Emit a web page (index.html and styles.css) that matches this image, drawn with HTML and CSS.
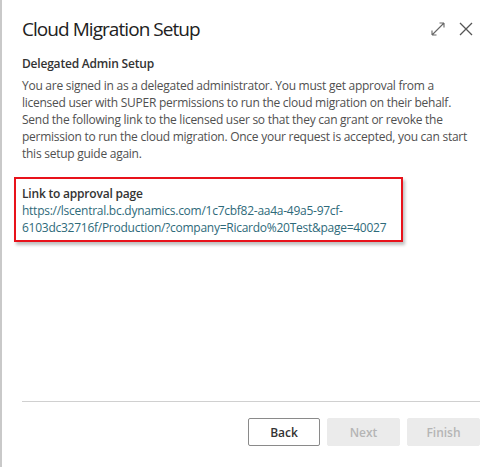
FILE: index.html
```html
<!DOCTYPE html>
<html>
<head>
<meta charset="utf-8">
<link rel="stylesheet" href="styles.css">
</head>
<body>
<div class="dialog">
  <header class="head">
    <h1 class="title">Cloud Migration Setup</h1>
    <div class="tools">
      <svg class="icon" width="14" height="14" viewBox="0 0 14 14"><path d="M1 13 L13 1 M1 13 L1 8.5 M1 13 L5.5 13 M13 1 L8.5 1 M13 1 L13 5.5" stroke="#666" stroke-width="1.1" fill="none"/></svg>
      <svg class="icon" width="14" height="14" viewBox="0 0 14 14"><path d="M1 1 L13 13 M13 1 L1 13" stroke="#555" stroke-width="1.3" fill="none"/></svg>
    </div>
  </header>
  <main class="content">
    <h2 class="subtitle">Delegated Admin Setup</h2>
    <p class="text">You are signed in as a delegated administrator. You must get approval from a licensed user with SUPER permissions to run the cloud migration on their behalf. Send the following link to the licensed user so that they can grant or revoke the permission to run the cloud migration. Once your request is accepted, you can start this setup guide again.</p>
    <div class="linkbox">
      <div class="label">Link to approval page</div>
      <div class="url">https://lscentral.bc.dynamics.com/1c7cbf82-aa4a-49a5-97cf-<br>6103dc32716f/Production/?company=Ricardo%20Test&amp;page=40027</div>
    </div>
  </main>
  <footer class="foot">
    <button class="btn primary">Back</button>
    <button class="btn disabled">Next</button>
    <button class="btn disabled">Finish</button>
  </footer>
</div>
</body>
</html>
```
FILE: styles.css
```css
html, body {
  margin: 0;
  padding: 0;
  background: #fff;
}
body {
  font-family: "Open Sans", "Noto Sans", sans-serif;
  color: #505050;
}
.dialog {
  box-sizing: border-box;
  width: 500px;
  height: 467px;
  border-left: 2px solid #c9c9c9;
  display: flex;
  flex-direction: column;
  padding: 0 20px 0 20px;
}
.head {
  display: flex;
  align-items: center;
  justify-content: space-between;
  height: 56px;
  padding-top: 2px;
  box-sizing: border-box;
}
.title {
  margin: 0;
  font-size: 19px;
  font-weight: 400;
  color: #212121;
  letter-spacing: -0.95px;
}
.tools {
  display: flex;
  gap: 14px;
  margin-right: 7px;
}
.icon { display: block; }
.content {
  flex: 1;
}
.subtitle {
  margin: 0;
  font-size: 12px;
  font-weight: 600;
  color: #333;
  line-height: 16px;
  letter-spacing: -0.2px;
}
.text {
  margin: 5px 0 0 0;
  font-size: 12px;
  line-height: 17px;
  color: #505050;
  letter-spacing: -0.26px;
}
.linkbox {
  margin: 15px 0 0 -8px;
  width: 389px;
  box-sizing: border-box;
  border: 2px solid #e8121b;
  padding: 6px 6px 4px 6px;
  box-shadow: 2px 3px 3px rgba(0,0,0,0.25);
}
.label {
  font-size: 12px;
  font-weight: 600;
  color: #333;
  line-height: 17px;
  letter-spacing: -0.2px;
}
.url {
  font-size: 12px;
  line-height: 17px;
  color: #2e6a7a;
  white-space: nowrap;
  letter-spacing: -0.26px;
}
.foot {
  border-top: 1px solid #d0d0d0;
  height: 66px;
  display: flex;
  justify-content: flex-end;
  align-items: flex-start;
  gap: 7px;
  padding-top: 16px;
  box-sizing: border-box;
}
.btn {
  width: 72px;
  height: 28px;
  font-family: inherit;
  font-size: 12px;
  font-weight: 600;
  border-radius: 2px;
  padding: 0;
}
.btn.primary {
  background: #fff;
  border: 1px solid #8a8a8a;
  color: #333;
}
.btn.disabled {
  background: #ebebeb;
  border: 1px solid #ebebeb;
  color: #b5b5b5;
  width: 73px;
}
```
